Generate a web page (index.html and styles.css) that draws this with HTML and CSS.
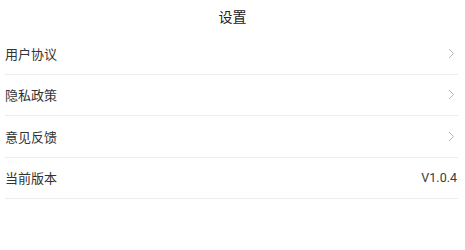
FILE: index.html
```html
<!DOCTYPE html>
<html lang="zh-CN">
<head>
<meta charset="utf-8">
<title>设置</title>
<link rel="stylesheet" href="styles.css">
</head>
<body>
<div class="page">
  <header class="title">设置</header>
  <ul class="list">
    <li class="row"><span class="label">用户协议</span><svg class="chev" width="7" height="11" viewBox="0 0 7 11"><polyline points="1,1 5.5,5.5 1,10" fill="none" stroke="#b8b8b8" stroke-width="1"/></svg></li>
    <li class="row"><span class="label">隐私政策</span><svg class="chev" width="7" height="11" viewBox="0 0 7 11"><polyline points="1,1 5.5,5.5 1,10" fill="none" stroke="#b8b8b8" stroke-width="1"/></svg></li>
    <li class="row"><span class="label">意见反馈</span><svg class="chev" width="7" height="11" viewBox="0 0 7 11"><polyline points="1,1 5.5,5.5 1,10" fill="none" stroke="#b8b8b8" stroke-width="1"/></svg></li>
    <li class="row"><span class="label">当前版本</span><span class="value">V1.0.4</span></li>
  </ul>
</div>
</body>
</html>
```
FILE: styles.css
```css
html, body {
  margin: 0;
  padding: 0;
  background: #fff;
}
body {
  font-family: Roboto, "Noto Sans CJK SC", "Noto Sans", sans-serif;
  color: #333;
}
.page {
  width: 465px;
}
.title {
  box-sizing: border-box;
  height: 33px;
  padding-bottom: 2px;
  display: flex;
  align-items: center;
  justify-content: center;
  font-family: "Noto Sans CJK SC", sans-serif;
  font-size: 14px;
  color: #222;
}
.list {
  list-style: none;
  margin: 0 7px 0 5px;
  padding: 0;
}
.row {
  height: 40.5px;
  display: flex;
  align-items: center;
  justify-content: space-between;
  border-bottom: 1px solid #ececec;
}
.label {
  font-family: "Noto Sans CJK SC", sans-serif;
  font-size: 13px;
  color: #333;
}
.chev {
  margin-right: 3px;
  display: block;
}
.value {
  font-family: Roboto, sans-serif;
  font-size: 12.5px;
  color: #3a3a3a;
  margin-right: 1px;
}
```
